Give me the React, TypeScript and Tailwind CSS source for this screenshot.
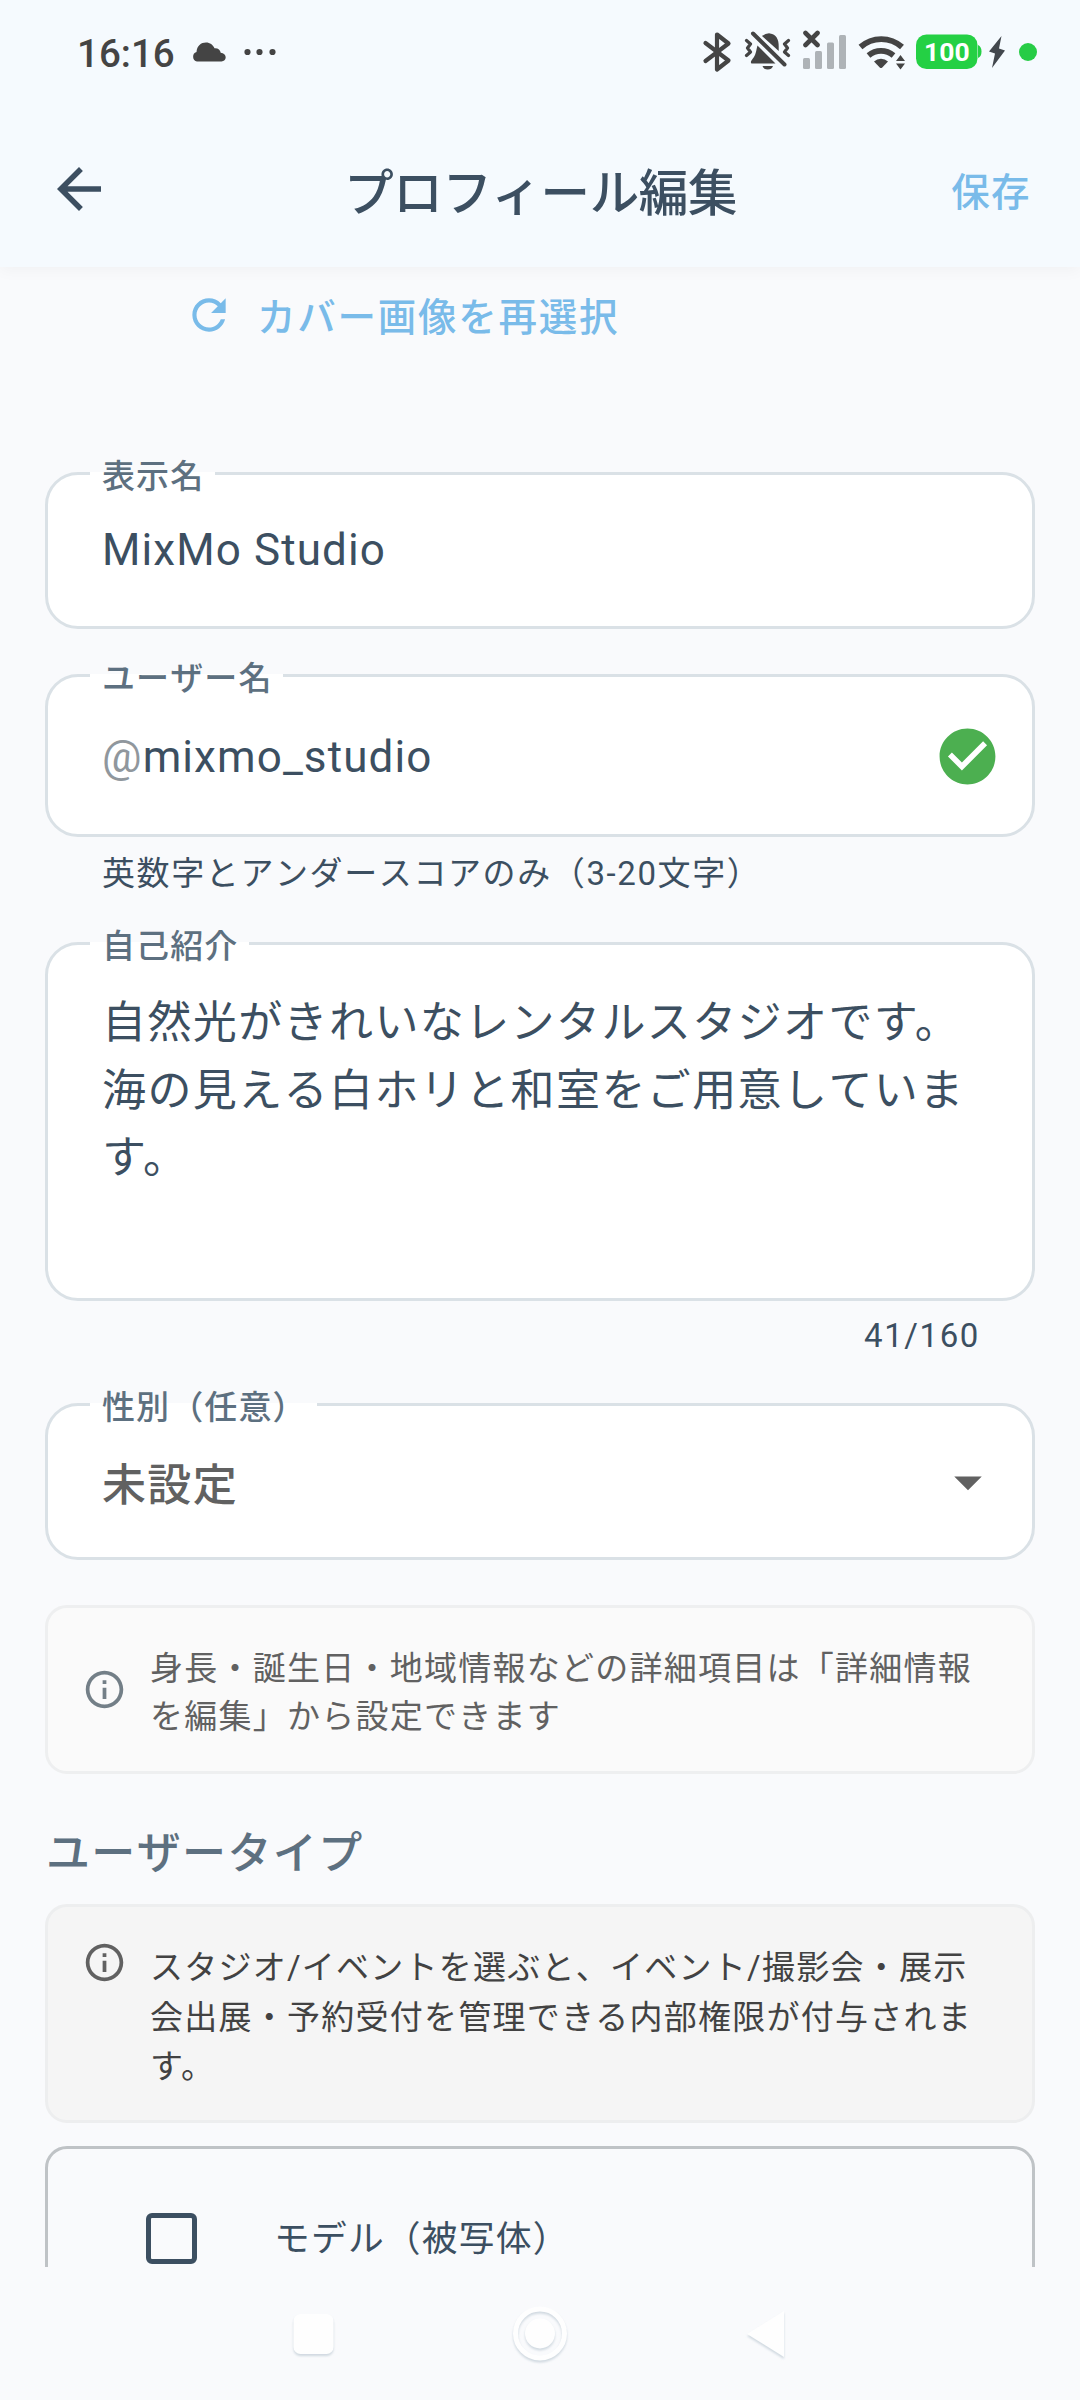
import type { ReactNode } from "react";

function StatusBar() {
  return (
    <div className="flex h-[104px] items-center justify-between pl-[77px] pr-[42px]">
      <div className="flex items-center">
        <span className="mt-[4px] text-[38.5px] leading-[52px] font-medium text-[#444444]">16:16</span>
        <svg className="ml-[17px]" width="34" height="20" viewBox="0 0 34 20" fill="#444444">
          <path d="M5 19.5a5 5 0 0 1-.5-9.6C5 3.8 9 0.5 14 0.5c4 0 7 2.300 8.500 5.800 3.500-.3 5.800 1.700 6.200 4.400 3 .3 5 2.300 5 4.600s-1.800 4.200-4.200 4.200z" />
        </svg>
        <svg className="ml-[18px]" width="32" height="8" viewBox="0 0 32 8" fill="#444444">
          <circle cx="3.500" cy="4" r="3.100" />
          <circle cx="15.500" cy="4" r="3.100" />
          <circle cx="28.500" cy="4" r="3.100" />
        </svg>
      </div>
      <svg width="338" height="44" viewBox="700 30 338 44">
        <path d="M705.500 43 728.500 60.500 717 69.500V34.500L728.500 43.500 705.500 61" fill="none" stroke="#444" strokeWidth="4.200" strokeLinecap="round" strokeLinejoin="round" />
        <g fill="#444">
          <path d="M762 36q4-3 8-2.600c6 .6 9 6 8.700 13v4.500z" />
          <path d="M757.500 45.500 775.500 63.500H751.500c-1.200-1-.5-2.500 1-4.500 3.500-4 3.500-8 5-13.500z" />
          <path d="M762.500 66h10.500a5.500 5 0 0 1-10.500 0z" />
        </g>
        <path d="M753 33.500 784.500 64.500" stroke="#444" strokeWidth="4" strokeLinecap="round" />
        <path d="m746.500 42 4 3.500-3 4 3 4-4 3.500M788.500 42l-4 3.500 3 4-3 4 4 3.500" transform="translate(0 -1.500)" fill="none" stroke="#444" strokeWidth="3.200" strokeLinejoin="round" strokeLinecap="round" />
        <path d="m805.500 33 12 12M817.500 33 805.500 45" stroke="#444" strokeWidth="4.600" strokeLinecap="round" />
        <g fill="#aeb3b7">
          <rect x="803" y="58" width="7" height="11" rx="1.500" />
          <rect x="815" y="51" width="7" height="18" rx="1.500" />
          <rect x="827" y="42.500" width="7" height="26.500" rx="1.500" />
          <rect x="839" y="35" width="7" height="34" rx="1.500" />
        </g>
        <path d="M860.500 47a31 31 0 0 1 41.500 0M868.500 55.500a19.500 19.500 0 0 1 25 0" fill="none" stroke="#444" strokeWidth="5.800" />
        <path d="M874 61.500a10.500 10.500 0 0 1 14 0l-6 6.200q-1 .8-2 0z" fill="#444" />
        <path d="M896 61 900.500 55 905 61zM896 63.500h9L900.500 69.500z" fill="#444" />
        <rect x="916" y="34.500" width="61.500" height="34.500" rx="10.500" fill="#24d044" />
        <path d="M978 45q3.500 1.500 3.500 6.500t-3.500 6.500z" fill="#24d044" />
        <text x="946.800" y="61" textAnchor="middle" fill="#fff" fontSize="26.500" fontWeight="700" fontFamily="Roboto">100</text>
        <path d="M1001.500 36 989 51.500l6 2-3 14.500L1005 50.500l-6-2z" fill="#42474d" />
        <circle cx="1028" cy="52" r="9" fill="#27cc46" />
      </svg>
    </div>
  );
}

function Header() {
  return (
    <header className="relative z-10 h-[267px] bg-[#f5fafe] shadow-[0_4px_14px_rgba(0,0,0,0.035)]">
      <StatusBar />
      <div className="flex h-[170px] items-center justify-between pl-[46px] pr-[49px]">
        <svg width="66" height="66" viewBox="0 0 24 24" fill="#3c4f61">
          <path d="M20 11H7.830l5.590-5.590L12 4l-8 8 8 8 1.410-1.410L7.830 13H20v-2z" />
        </svg>
        <h1 className="mt-[10px] ml-[18px] text-[49.5px] leading-[64px] font-medium tracking-[-0.4px] text-[#3c4f61]">プロフィール編集</h1>
        <button className="mt-[7px] text-[38.5px] leading-[64px] font-medium tracking-[1.375px] text-[#79bbe9]">保存</button>
      </div>
    </header>
  );
}

function Field({ label, className, notch, children }: { label: string; className: string; notch: string; children: ReactNode }) {
  return (
    <div className={`relative rounded-[33px] border-[3px] border-[#dae1e6] bg-white pl-[54px] pr-[37px] ${className}`}>
      <div className={`absolute -top-[3px] left-[42px] h-[4px] bg-white ${notch}`} />
      <span className="absolute -top-[18px] left-[54px] text-[33px] leading-[40px] font-medium tracking-[1.1px] whitespace-nowrap text-[#5d7080]">
        {label}
      </span>
      {children}
    </div>
  );
}

function InfoIcon({ color }: { color: string }) {
  return (
    <svg className="shrink-0" width="45" height="45" viewBox="0 0 24 24" fill={color}>
      <path d="M11 7h2v2h-2zm0 4h2v6h-2zm1-9C6.480 2 2 6.480 2 12s4.480 10 10 10 10-4.480 10-10S17.520 2 12 2zm0 18c-4.410 0-8-3.590-8-8s3.590-8 8-8 8 3.590 8 8-3.590 8-8 8z" />
    </svg>
  );
}

function NavBar() {
  return (
    <nav className="flex h-[133px] justify-center bg-[#f9fafc] pt-[36px]">
      <svg width="500" height="66" viewBox="290 2303 500 66" className="drop-shadow-[0_2px_1px_rgba(120,145,165,0.32)]">
        <rect x="293.500" y="2314" width="40" height="40" rx="7" fill="#fefefe" />
        <circle cx="540" cy="2333.500" r="24.500" fill="none" stroke="#fefefe" strokeWidth="5" />
        <circle cx="540" cy="2333.500" r="15" fill="#fefefe" />
        <path d="M747 2334 784 2311v46z" fill="#fefefe" />
      </svg>
    </nav>
  );
}

export default function App() {
  return (
    <div
      lang="ja"
      className="flex h-[2400px] w-[1080px] flex-col overflow-hidden bg-[#f9fafc] font-[Roboto,'Noto_Sans_CJK_JP',sans-serif] text-[#3c4f61] [font-kerning:none]"
    >
      <Header />
      <main className="h-[2000px] overflow-hidden px-[45px]">
        <button className="mt-[23px] ml-[139px] flex items-center gap-[23px] text-[38.5px] leading-[50px] font-medium tracking-[1.75px] text-[#79bbe9]">
          <svg width="50" height="50" viewBox="0 0 24 24" fill="currentColor">
            <path d="M17.650 6.350C16.200 4.900 14.210 4 12 4c-4.420 0-7.990 3.580-7.990 8s3.570 8 7.990 8c3.730 0 6.840-2.550 7.730-6h-2.080c-.82 2.330-3.040 4-5.650 4-3.310 0-6-2.690-6-6s2.690-6 6-6c1.660 0 3.140.69 4.220 1.780L13 11h7V4l-2.350 2.350z" />
          </svg>
          <span className="-mb-[5px]">カバー画像を再選択</span>
        </button>

        <Field label="表示名" className="mt-[132px] h-[157px] pt-[42px]" notch="w-[125px]">
          <p className="text-[44px] leading-[66px] tracking-[1.1px]">MixMo Studio</p>
        </Field>

        <Field label="ユーザー名" className="mt-[45px] flex h-[163px] items-start justify-between pt-[47px]" notch="w-[193px]">
          <p className="text-[44px] leading-[66px] tracking-[1.1px]">
            <span className="text-[#90979d]">@</span>mixmo_studio
          </p>
          <svg className="-mt-[1px] -mr-[6px]" width="67" height="67" viewBox="0 0 24 24" fill="#4caf50">
            <path d="M12 2C6.480 2 2 6.480 2 12s4.480 10 10 10 10-4.480 10-10S17.520 2 12 2zm-2 15l-5-5 1.410-1.410L10 14.170l7.590-7.590L19 8l-9 9z" />
          </svg>
        </Field>
        <p className="mt-[17px] ml-[57px] text-[33px] leading-[40px] tracking-[1.6px]">英数字とアンダースコアのみ（3-20文字）</p>

        <Field label="自己紹介" className="mt-[48px] h-[359px] pt-[45px]" notch="w-[159px]">
          <p className="text-[44px] leading-[67.5px] tracking-[1.4px] whitespace-nowrap">
            自然光がきれいなレンタルスタジオで<span className="[font-kerning:normal]">す。</span>
            <br />
            海の見える白ホリと和室をご用意していま
            <br />
            <span className="[font-kerning:normal]">す。</span>
          </p>
        </Field>
        <p className="mt-[15px] mr-[55px] text-right text-[33px] leading-[40px] tracking-[1.6px]">41/160</p>

        <Field label="性別（任意）" className="mt-[47px] flex h-[157px] items-start justify-between pt-[47px]" notch="w-[227px]">
          <p className="text-[44px] leading-[66px] font-medium tracking-[1.375px] text-[#616161]">未設定</p>
          <svg className="-mt-[4px] -mr-[6px]" width="66" height="66" viewBox="0 0 24 24" fill="#616161">
            <path d="m7 10 5 5 5-5z" />
          </svg>
        </Field>

        <div className="mt-[45px] flex h-[169px] items-center gap-[23px] rounded-[22px] border-[3px] border-[#eeeff0] bg-[#fafafa] pl-[34px]">
          <InfoIcon color="#737f87" />
          <p className="mt-[6px] text-[33px] leading-[48px] tracking-[1.25px] whitespace-nowrap text-[#616161]">
            身長・誕生日・地域情報などの詳細項目は「詳細情報
            <br />
            を編集」から設定できます
          </p>
        </div>

        <h2 className="mt-[47px] ml-[1px] text-[44px] leading-[66px] font-medium tracking-[1.375px] text-[#5d7080]">ユーザータイプ</h2>

        <div className="mt-[17px] flex h-[219px] items-start gap-[23px] rounded-[22px] border-[3px] border-[#edeeef] bg-[#f5f5f5] pt-[33px] pl-[34px]">
          <InfoIcon color="#616161" />
          <p className="mt-[3px] text-[33px] leading-[49.5px] tracking-[1.25px] whitespace-nowrap text-[#424242]">
            スタジオ/イベントを選ぶと、イベント/撮影会・展示
            <br />
            会出展・予約受付を管理できる内部権限が付与されま
            <br />
            <span className="[font-kerning:normal]">す。</span>
          </p>
        </div>

        <div className="mt-[23px] h-[400px] rounded-[22px] border-[3px] border-[#bfc3c6] pt-[64px] pl-[98px]">
          <label className="flex items-center gap-[77px]">
            <span className="h-[51px] w-[51px] rounded-[6px] border-[5.5px] border-[#3c4f61]" />
            <span className="text-[35.75px] leading-[50px] tracking-[1.2px]">モデル（被写体）</span>
          </label>
        </div>
      </main>
      <NavBar />
    </div>
  );
}
